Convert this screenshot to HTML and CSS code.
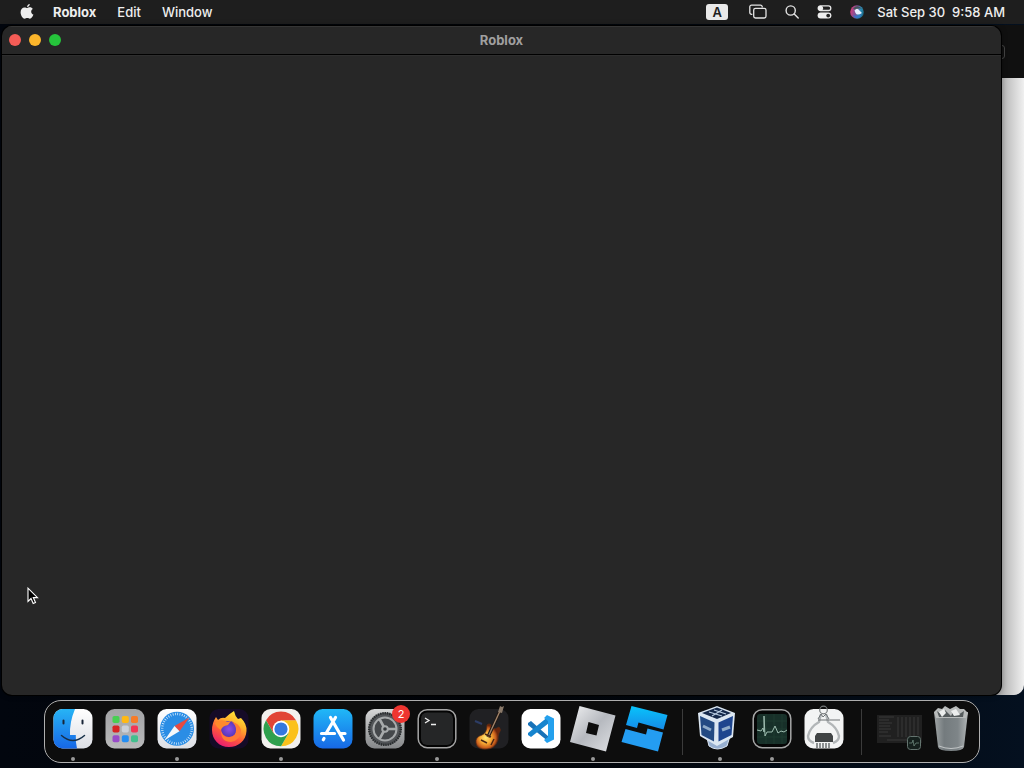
FILE: index.html
```html
<!DOCTYPE html>
<html lang="en">
<head>
<meta charset="utf-8">
<meta name="viewport" content="width=device-width, initial-scale=1">
<title>Roblox</title>
<link rel="stylesheet" href="styles.css">
</head>
<body class="desktop">
<header class="menubar">
  <nav class="menus" aria-label="Menu bar">
    <button class="menu apple" aria-label="Apple menu">
      <svg width="14" height="18" viewBox="0 0 14 18"><path fill="#eee" d="M9.800 1c.1 1.500-1.200 3-2.700 3C6.900 2.500 8.300 1.200 9.800 1zM7.200 5C8 5 8.600 4.300 9.900 4.300c1.200 0 2.300.7 2.900 1.600-2.400 1.300-2 4.700.6 5.700-.6 1.800-2 4.100-3.500 4.100-1 0-1.400-.6-2.600-.6s-1.700.6-2.600.6C2.800 15.700.6 12.300.6 9.200c0-3 1.900-4.800 3.900-4.800C5.700 4.400 6.500 5 7.200 5z"/></svg>
    </button>
    <button class="menu app-name">Roblox</button>
    <button class="menu">Edit</button>
    <button class="menu">Window</button>
  </nav>
  <div class="status">
    <button class="input-source" aria-label="Input source">A</button>
    <button class="menu" aria-label="Screen mirroring"><svg width="18" height="16" viewBox="0 0 18 16" fill="none" stroke="#e4e4e4" stroke-width="1.300"><path d="M3.300 10.300H2.500A1.700 1.700 0 0 1 .8 8.600V2.800A1.700 1.700 0 0 1 2.500 1.100h9A1.700 1.700 0 0 1 13.200 2.800v.7"/><rect x="4.700" y="4.300" width="12.300" height="9.700" rx="1.800"/></svg></button>
    <button class="menu" aria-label="Spotlight"><svg width="14" height="16" viewBox="0 0 14 16" fill="none" stroke="#e4e4e4" stroke-width="1.400"><circle cx="5.700" cy="6.500" r="4.600"/><path d="M9.200 10l4 4" stroke-linecap="round"/></svg></button>
    <button class="menu" aria-label="Control Center"><svg width="15" height="16" viewBox="0 0 15 16"><rect x="1.200" y="1.900" width="12.600" height="4.600" rx="2.300" fill="none" stroke="#e4e4e4" stroke-width="1.300"/><circle cx="3.600" cy="4.200" r="2.500" fill="#eee"/><rect x=".6" y="8.600" width="13.800" height="6" rx="3" fill="#eee"/><circle cx="11.200" cy="11.600" r="1.900" fill="#222"/></svg></button>
    <button class="menu" aria-label="Siri"><svg width="14" height="16" viewBox="0 0 14 16"><defs><linearGradient id="siri" x1="0" x2="1" y1=".3" y2=".6"><stop stop-color="#d63b76"/><stop offset=".45" stop-color="#79549a"/><stop offset=".7" stop-color="#2c8db6"/><stop offset="1" stop-color="#196a86"/></linearGradient></defs><circle cx="7" cy="8" r="6.800" fill="url(#siri)"/><path d="M3 4.500Q8 0 12 5q-4-2-6 1z" fill="#44565b"/><path d="M4.500 6.500Q7 3 9.500 6.500l2.500 2.500Q7 12 5.500 9z" fill="#e8f0ff"/><path d="M3 11q4 2.500 9-1-2 4-5 4t-4-3z" fill="#3975c9"/></svg></button>
    <button class="menu clock"><span>Sat Sep 30</span><time>9:58 AM</time></button>
  </div>
</header>

<main class="workspace">
  <div class="back-window" aria-hidden="true"><div class="back-toolbar"><span class="back-field"></span></div></div>
  <section class="window" aria-label="Roblox">
    <div class="titlebar">
      <div class="lights">
        <button class="light close" aria-label="Close"></button>
        <button class="light minimize" aria-label="Minimize"></button>
        <button class="light zoom" aria-label="Zoom"></button>
      </div>
      <h1 class="title">Roblox</h1>
    </div>
    <div class="content"></div>
  </section>
  <svg class="cursor" width="12" height="19" viewBox="0 0 12 19" aria-hidden="true"><path d="M1 1.200v13.200l3-2.900 2.200 5 2.300-1-2.200-4.900h4.200z" fill="#000" stroke="#fff" stroke-width="1.100"/></svg>
</main>

<footer class="dock-area">
<nav class="dock" aria-label="Dock">
  <button class="app running" aria-label="Finder"><svg viewBox="0 0 52 60"><defs><linearGradient id="finder" x2="0" y2="1"><stop stop-color="#27b4f5"/><stop offset="1" stop-color="#1767e6"/></linearGradient><linearGradient id="white" x2="0" y2="1"><stop stop-color="#fff"/><stop offset="1" stop-color="#dcdfe5"/></linearGradient></defs><rect x="6.500" y="7" width="39" height="39.500" rx="9" fill="url(#white)"/><path d="M28 7H15.500a9 9 0 0 0-9 9v21.500a9 9 0 0 0 9 9H30q-1.500-6-1.200-13.500H23Q22.500 20 28 7z" fill="url(#finder)"/><path d="M16.500 18.500v3M35.500 18.500v3" stroke="#182538" stroke-width="2" stroke-linecap="round"/><path d="M14.500 33.500q11.500 10 23 0" fill="none" stroke="#173049" stroke-width="1.500" stroke-linecap="round"/></svg></button>
  <button class="app" aria-label="Launchpad"><svg viewBox="0 0 52 60"><defs><linearGradient id="pad" x2="0" y2="1"><stop stop-color="#a2a3a5"/><stop offset="1" stop-color="#b9babb"/></linearGradient></defs><rect x="6.500" y="7" width="39" height="39.500" rx="9" fill="url(#pad)"/><rect x="13.500" y="14" width="7" height="7" rx="1.800" fill="#47cf52"/><rect x="22.800" y="14" width="7" height="7" rx="1.800" fill="#ffb914"/><rect x="32" y="14" width="7" height="7" rx="1.800" fill="#f77c28"/><rect x="13.500" y="23.500" width="7" height="7" rx="1.800" fill="#d72424"/><rect x="22.800" y="23.500" width="7" height="7" rx="1.800" fill="#cbd0d8"/><rect x="32" y="23.500" width="7" height="7" rx="1.800" fill="#f23655"/><rect x="13.500" y="33.300" width="7" height="7" rx="1.800" fill="#984bc9"/><rect x="22.800" y="33.300" width="7" height="7" rx="1.800" fill="#258ef2"/><rect x="32" y="33.300" width="7" height="7" rx="1.800" fill="#43bf8e"/></svg></button>
  <button class="app running" aria-label="Safari"><svg viewBox="0 0 52 60"><rect x="6.500" y="7" width="39" height="39.500" rx="9" fill="url(#white)"/><circle cx="26" cy="26.800" r="17" fill="#2a8de5"/><circle cx="26" cy="26.800" r="14.800" fill="none" stroke="#d4eafc" stroke-width="2.400" stroke-dasharray=".8 1.520"/><path d="M38.500 15.500L23.500 24l5 5.200z" fill="#e84a41"/><path d="M13.500 38.200L23.500 24l5 5.200z" fill="#f5f7fa"/></svg></button>
  <button class="app" aria-label="Firefox"><svg viewBox="0 0 52 60"><defs><linearGradient id="fox" x1=".8" y1="0" x2=".3" y2="1"><stop stop-color="#fff13b"/><stop offset=".35" stop-color="#ffb02b"/><stop offset=".65" stop-color="#ff5a3a"/><stop offset="1" stop-color="#e81a72"/></linearGradient><radialGradient id="globe"><stop stop-color="#8c4de8"/><stop offset="1" stop-color="#5538b8"/></radialGradient></defs><rect x="6.500" y="7" width="39" height="39.500" rx="9" fill="#150b27"/><path d="M31 9q1 5 4 8l3-1q6 6 5.500 13C43 39 35 45 26 45 16 45 9 37.500 9 28q0-7 4-13l2 3q3-3 7-2 4-4 9-7z" fill="url(#fox)"/><circle cx="26" cy="27" r="8" fill="url(#globe)"/><path d="M12 21q6-5 12-1l4-1-3 4q-6 1-7 5-5-3-6-7z" fill="#ff8a2b"/><path d="M18 29q2 7 9 6 6-1 6-7 0-5-4-8 7 1 9 8 0 10-10 12-10 0-10-11z" fill="#ff7a35"/></svg></button>
  <button class="app running" aria-label="Chrome"><svg viewBox="0 0 52 60"><rect x="6.500" y="7" width="39" height="39.500" rx="9" fill="#f3f1ee"/><path d="M26 18.300h15A17.300 17.300 0 0 1 26 44.300l7.500-13z" fill="#fbc11b"/><path d="M26 18.300h15a17.300 17.300 0 0 0-30 0l7.500 13z" fill="#e14435"/><path d="M11 18.300A17.300 17.300 0 0 0 26 44.300l7.500-13-15 0z" fill="#2fa04d"/><circle cx="26" cy="27" r="8.300" fill="#fff"/><circle cx="26" cy="27" r="6.600" fill="#3478df"/></svg></button>
  <button class="app" aria-label="App Store"><svg viewBox="0 0 52 60"><defs><linearGradient id="store" x2="0" y2="1"><stop stop-color="#20b8f7"/><stop offset="1" stop-color="#1768e6"/></linearGradient></defs><rect x="6.500" y="7" width="39" height="39.500" rx="9" fill="url(#store)"/><g fill="none" stroke="#fff" stroke-width="3.200" stroke-linecap="round"><path d="M23.500 15.500L36.500 38M28.500 15.500L19 31.500M14.500 31.500h13M33.500 31.500h4.500M17 36.500l-.7 1.200"/></g></svg></button>
  <button class="app" aria-label="System Settings, 2 notifications"><svg viewBox="0 0 52 60"><defs><linearGradient id="metal" x2="0" y2="1"><stop stop-color="#d6d7d7"/><stop offset="1" stop-color="#858789"/></linearGradient></defs><rect x="6.500" y="7" width="39" height="39.500" rx="9" fill="url(#metal)"/><circle cx="26" cy="27" r="16.500" fill="#515457"/><circle cx="26" cy="27" r="15.800" fill="none" stroke="#292c2e" stroke-width="2.400" stroke-dasharray="1.300 1"/><circle cx="26" cy="27" r="11.500" fill="#45484b" stroke="#a7aaab" stroke-width="2"/><path d="M26 27L20.500 17M26 27h12M26 27l-5.500 10" stroke="#a7aaab" stroke-width="2.600"/><circle cx="26" cy="27" r="3.800" fill="#a7aaab"/><circle cx="26" cy="27" r="1.800" fill="#34373a"/></svg><span class="badge">2</span></button>
  <button class="app running" aria-label="Terminal"><svg viewBox="0 0 52 60"><rect x="7.200" y="7.700" width="37.600" height="38" rx="9" fill="#030303" stroke="#a5a5a5" stroke-width="1.500"/><rect x="10" y="10.500" width="32" height="32.500" rx="6" fill="#252627"/><path d="M14 16l4 2.500-4 2.500M20 22.500h5" fill="none" stroke="#eee" stroke-width="1.300"/></svg></button>
  <button class="app" aria-label="GarageBand"><svg viewBox="0 0 52 60"><defs><radialGradient id="guitar" cx=".4" cy=".55"><stop stop-color="#ffe878"/><stop offset=".45" stop-color="#f9ac35"/><stop offset=".8" stop-color="#c95f1d"/><stop offset="1" stop-color="#6b260c"/></radialGradient></defs><rect x="6.500" y="7" width="39" height="39.500" rx="9" fill="#202023"/><path d="M12 19l7 3" stroke="#2c3c66" stroke-width="2"/><path d="M24 23q3-3 6 2l2 2 4-2q3 3 0 6-1 3-1 7-3 9-11 9-10 1-11-6-1-6 6-8 5-2 5-10z" fill="url(#guitar)" stroke="#5b2b14" stroke-width=".7"/><path d="M25 35L37 9" stroke="#201916" stroke-width="3.400"/><path d="M25 35L37 9" stroke="#a5876c" stroke-width="1.300"/><path d="M35 10l2-6 2 1 2-1-2 7z" fill="#8b7a6a"/><path d="M18 38l6 3M22 32l6 3M31 37l-3 6" stroke="#4b2715" stroke-width="1.500"/></svg></button>
  <button class="app" aria-label="Visual Studio Code"><svg viewBox="0 0 52 60"><rect x="6.500" y="7" width="39" height="39.500" rx="9" fill="#fff"/><path d="M13 21l3-2 18 16v5L13 23z" fill="#1872b8"/><path d="M34 14v7L16 35l-3-2v-2z" fill="#1684ce"/><path d="M32 13l7 3.500v21L32 41l-3-3 4-3V19l-4-3z" fill="#24a0ed"/></svg></button>
  <button class="app running" aria-label="Roblox"><svg viewBox="0 0 52 60"><defs><linearGradient id="roblox" x2="1" y2="1"><stop stop-color="#f1f2f3"/><stop offset=".5" stop-color="#b6b9bf"/><stop offset="1" stop-color="#e0e2e5"/></linearGradient></defs><path fill="url(#roblox)" fill-rule="evenodd" d="M12.500 4l36 9.500-9.500 36L3 40zM21.500 20L19 31l10.500 2.500L32 23z"/></svg></button>
  <button class="app" aria-label="Roblox Studio"><svg viewBox="0 0 52 60"><defs><linearGradient id="studio" x2="0" y2="1"><stop stop-color="#08c4fb"/><stop offset="1" stop-color="#168be8"/></linearGradient></defs><path fill="url(#studio)" d="M12.500 4l36 9-4 14.500-25-7-1.500 5.500-11-3z"/><path fill="#249df2" d="M6.500 27l20.500 5.500 1.500-6 15.500 4-5 19L2.500 40z"/></svg></button>
  <span class="divider"></span>
  <button class="app running" aria-label="VirtualBox"><svg viewBox="0 0 52 60"><path d="M13 36l2 8q8 6 18 0l3-10z" fill="#97afd0" stroke="#dae5f3"/><path d="M23 4l18 7-2 24-16 9L6 34 4 11z" fill="#dce7f2"/><path d="M23 5.500L37 11l-14 6L8 11z" fill="#15294b"/><path d="M6 14l14.500 6.500-.5 19L7.500 33z" fill="#234a83"/><path d="M39 14l-14.500 6.500v19L37.500 33z" fill="#1e458e"/><path d="M15 10l13 4M20 8l12 4M28 8l-10 6" stroke="#b6cae0" stroke-width="1.300"/><path d="M9 24l8 4M28 28l8-3" fill="none" stroke="#8fabc9" stroke-width="3"/></svg></button>
  <button class="app running" aria-label="Activity Monitor"><svg viewBox="0 0 52 60"><rect x="7.200" y="7.700" width="37.600" height="38" rx="9" fill="#050606" stroke="#a6a7a7" stroke-width="1.500"/><rect x="11" y="12" width="30" height="30" rx="3" fill="#173029"/><path d="M11 19h30M11 27h30M11 35h30M20 12v30M28 12v30M36 12v30" stroke="#203f35" stroke-width=".7"/><path d="M11 28l4 1 2-3 1 4V14l1 20 2-4 5 0 3-6 3 7 3-2 3 1 3-2" fill="none" stroke="#9ebdb0" stroke-width="1"/></svg></button>
  <button class="app" aria-label="System Information"><svg viewBox="0 0 52 60"><rect x="6.500" y="7" width="39" height="39.500" rx="9" fill="#f3f4f4"/><circle cx="25.500" cy="8" r="3.800" fill="none" stroke="#777b7c" stroke-width="1.200"/><path d="M23 12l-2 8q-9 5-11 14 0 5 6 7M28 12l2 8q9 5 11 14 0 5-6 7" fill="none" stroke="#b2b6b8" stroke-width="2.400"/><path d="M20 17l3-5 2 3 3-3 3 5M20 18h22" fill="none" stroke="#6e7375" stroke-width="1"/><path d="M19 31h14l2 3v6H17v-6z" fill="#414445"/><path d="M19 41v5m3-5v5m3-5v5m3-5v5m3-5v5" stroke="#606567" stroke-width="1.400"/></svg></button>
  <span class="divider"></span>
  <button class="app" aria-label="Minimized Activity Monitor window"><svg viewBox="0 0 52 60"><rect x="4" y="13" width="45" height="28" fill="#202020"/><path d="M6 15h15M6 18h10M6 21h13M6 24h11M6 27h12M6 30h9M6 34h12M25 15v20M29 15v20M33 15v20M37 15v20M41 15v20M45 15v18M14 38h23" stroke="#404040" stroke-width=".8"/><rect x="34.500" y="34.500" width="13" height="13" rx="3" fill="#15201d" stroke="#64746f"/><path d="M36 41h3l1-3 1 6 2-3h3" fill="none" stroke="#6c867b" stroke-width=".8"/></svg></button>
  <button class="app" aria-label="Trash"><svg viewBox="0 0 52 60"><defs><linearGradient id="bin"><stop stop-color="#a1a6a7"/><stop offset=".3" stop-color="#747b7e"/><stop offset=".7" stop-color="#7e8588"/><stop offset="1" stop-color="#b1b5b6"/></linearGradient></defs><path d="M9 10l4 35q1 4 13 4t13-4l4-35z" fill="url(#bin)"/><path d="M9 10l4-4 4 1 3-3 5 3 6-3 4 3 4 0 4 4-2 5H11z" fill="#b9bcbc"/><path d="M12 9l5 4 3-5 6 6 3-6 4 5 6-4-1 6H14z" fill="#555b5d"/><path d="M14 10l5-3 2 4-4 4zM26 9l5-2 4 6-6 1z" fill="#eceeee"/><path d="M14 44q12 5 24 0" fill="none" stroke="#c1c5c6"/></svg></button>
</nav>
</footer>
</body>
</html>
```
FILE: styles.css
```css
* {
  box-sizing: border-box;
}

body,
h1 {
  margin: 0;
}

button {
  padding: 0;
  border: 0;
  background: none;
  color: inherit;
  font: inherit;
}

svg {
  display: block;
}

.desktop {
  display: flex;
  flex-direction: column;
  height: 100vh;
  overflow: hidden;
  background: linear-gradient(90deg, #02060e, #010307 50%, #04101f);
  color: #eeeeee;
  font: 13px/16px Inter, "Liberation Sans", sans-serif;
}

.menubar {
  display: flex;
  flex: none;
  align-items: center;
  justify-content: space-between;
  height: 24px;
  padding: 0 19px 1px 20px;
  background: #1e1e1e;
  font-weight: 500;
}

.menus,
.status {
  display: flex;
  align-items: center;
  gap: 21px;
}

.apple {
  margin-right: -2px;
}

.app-name {
  font-weight: 700;
}

.input-source {
  width: 22px;
  height: 16px;
  margin-right: 3px;
  border-radius: 3px;
  background: #e9e9e9;
  color: #1e1e1e;
  font-weight: 600;
}

.status {
  gap: 18px;
}

.clock {
  display: flex;
  gap: 7px;
  margin-left: -5px;
}

.workspace {
  position: relative;
  display: flex;
  flex: 1;
  padding: 2px 23px 1px 2px;
}

.back-window {
  position: absolute;
  inset: 1px 0 1px 50%;
  overflow: hidden;
  border-radius: 0 0 10px 10px;
  background: linear-gradient(90deg, #aaaaaa 95%, #f0f0f0);
}

.back-toolbar {
  display: flex;
  align-items: center;
  justify-content: flex-end;
  height: 53px;
  padding-right: 19px;
  background: #101010;
}

.back-field {
  width: 40px;
  height: 14px;
  border: 1px solid #444444;
  border-radius: 3px;
}

.window {
  position: relative;
  display: flex;
  flex: 1;
  flex-direction: column;
  overflow: hidden;
  border-radius: 10px;
  background: #272727;
  box-shadow: 0 0 0 1px #000000, 0 0 6px #00000066;
}

.titlebar {
  display: grid;
  grid-template-columns: 1fr auto 1fr;
  align-items: center;
  height: 29px;
  padding: 0 7px 1px;
  border-top: 1px solid #353535;
  border-bottom: 1px solid #000000;
}

.lights {
  display: flex;
  gap: 8px;
}

.light {
  width: 12px;
  height: 12px;
  border-radius: 50%;
}

.close {
  background: #f45c56;
}

.minimize {
  background: #fcb62b;
}

.zoom {
  background: #25c43b;
}

.title {
  color: #a0a0a0;
  font-size: 13px;
  font-weight: 700;
}

.content {
  flex: 1;
  border-top: 1px solid #2e2e2e;
}

.cursor {
  position: absolute;
  top: 563px;
  left: 27px;
}

.dock-area {
  display: flex;
  flex: none;
  justify-content: center;
  padding: 4px 0 5px;
}

.dock {
  display: flex;
  height: 63px;
  padding: 1px 2px 0;
  border: 1px solid #b0b0b0;
  border-radius: 17px;
  background: #0d0d0d;
}

.app {
  position: relative;
  width: 52px;
  height: 60px;
}

.running::after {
  position: absolute;
  bottom: 1px;
  left: 24px;
  width: 4px;
  height: 4px;
  border-radius: 50%;
  background: #999999;
  content: "";
}

.badge {
  position: absolute;
  top: 3px;
  right: 1px;
  width: 18px;
  height: 18px;
  border-radius: 50%;
  background: #ee3530;
  color: #ffffff;
  font-size: 11px;
  line-height: 18px;
  text-align: center;
}

.divider {
  align-self: center;
  width: 1px;
  height: 46px;
  margin: 0 11px;
  background: #3b3b3b;
}
```
